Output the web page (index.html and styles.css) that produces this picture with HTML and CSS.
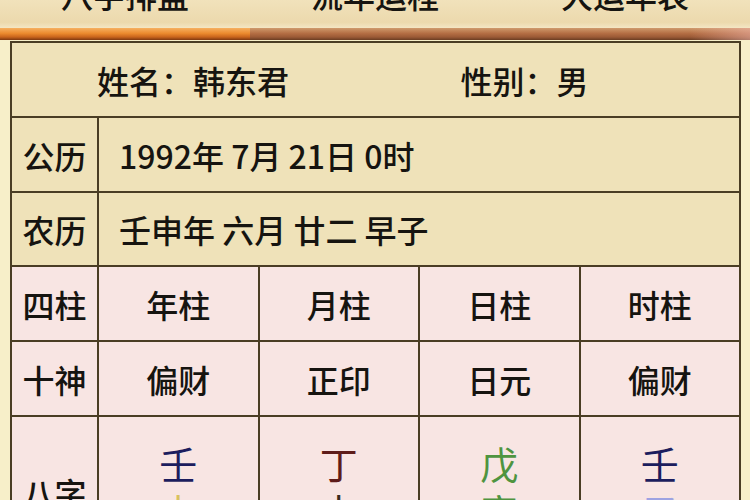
FILE: index.html
```html
<!DOCTYPE html>
<html lang="zh-CN">
<head>
<meta charset="utf-8">
<title>八字排盘</title>
<link rel="stylesheet" href="styles.css">
</head>
<body>
<div class="tabs">
  <div class="tab"><span class="tab-label">八字排盘</span></div>
  <div class="tab"><span class="tab-label">流年运程</span></div>
  <div class="tab"><span class="tab-label">大运年表</span></div>
</div>
<div class="tabbar">
  <div class="seg seg-active"></div>
  <div class="seg seg-rest"></div>
</div>
<div class="sheet">
  <div class="cell info span-all">
    <div class="half">姓名：韩东君</div>
    <div class="half">性别：男</div>
  </div>

  <div class="cell label beige">公历</div>
  <div class="cell value beige span-4">1992年 7月 21日 0时</div>

  <div class="cell label beige">农历</div>
  <div class="cell value beige span-4">壬申年 六月 廿二 早子</div>

  <div class="cell label pink">四柱</div>
  <div class="cell center pink">年柱</div>
  <div class="cell center pink">月柱</div>
  <div class="cell center pink">日柱</div>
  <div class="cell center pink">时柱</div>

  <div class="cell label pink">十神</div>
  <div class="cell center pink">偏财</div>
  <div class="cell center pink">正印</div>
  <div class="cell center pink">日元</div>
  <div class="cell center pink">偏财</div>

  <div class="cell label pink">八字</div>
  <div class="cell pillar pink"><span class="gz water">壬</span><span class="gz metal">申</span></div>
  <div class="cell pillar pink"><span class="gz fire">丁</span><span class="gz earth">未</span></div>
  <div class="cell pillar pink"><span class="gz wood">戊</span><span class="gz wood">寅</span></div>
  <div class="cell pillar pink"><span class="gz water">壬</span><span class="gz water-light">子</span></div>
</div>
</body>
</html>
```

FILE: styles.css
```css
html, body {
  margin: 0;
  padding: 0;
}
body {
  width: 750px;
  height: 500px;
  overflow: hidden;
  background: #f7efc9;
  font-family: "Noto Sans CJK SC", "Noto Sans", sans-serif;
  color: #161410;
}

.tabs {
  display: grid;
  grid-template-columns: repeat(3, 1fr);
  height: 28px;
  overflow: hidden;
  background: linear-gradient(#f1e2bb, #ecd9ad 80%, #f4e6c4);
}
.tab {
  text-align: center;
}
.tab-label {
  display: block;
  font-size: 32px;
  font-weight: 500;
  line-height: 32px;
  margin-top: -22px;
}

.tabbar {
  display: grid;
  grid-template-columns: 250px 1fr;
  height: 12px;
  margin-bottom: 1px;
}
.seg-active {
  background: linear-gradient(#f6b061, #eb8a2e 45%, #c9641c 75%, #7d3810);
}
.seg-rest {
  background: linear-gradient(90deg, rgba(0,0,0,0) 88%, rgba(240,180,170,0.55)),
              linear-gradient(#cf9a6c, #b46e44 45%, #9b5a36 75%, #6a3c22);
}

.sheet {
  margin-left: 10px;
  width: 727px;
  display: grid;
  grid-template-columns: 85px repeat(4, 1fr);
  grid-template-rows: 73px 73px 72px 73px 73px 150px;
  gap: 2px;
  background: #4a3d24;
  border: 2px solid #4a3d24;
}

.cell {
  display: flex;
  align-items: center;
  font-size: 32px;
  font-weight: 500;
  line-height: 1;
}
.beige {
  background: #efe2b9;
}
.pink {
  background: #f8e5e3;
}
.span-all {
  grid-column: 1 / -1;
}
.span-4 {
  grid-column: 2 / -1;
}
.info {
  display: grid;
  grid-template-columns: 1fr 1fr;
  background: #efe2b9;
}
.half {
  padding-left: 85px;
}
.label {
  justify-content: center;
}
.value {
  padding-left: 20px;
}
.center {
  justify-content: center;
}

.pillar {
  flex-direction: column;
  justify-content: center;
  gap: 10px;
  padding-bottom: 10px;
  box-sizing: border-box;
}
.gz {
  font-size: 38px;
  font-weight: 400;
  line-height: 38px;
}
.water { color: #1c1d5e; }
.fire { color: #5e1c1a; }
.wood { color: #4f9440; }
.metal { color: #d9c15f; }
.earth { color: #3a2a1c; }
.water-light { color: #9ea3e2; }
```
